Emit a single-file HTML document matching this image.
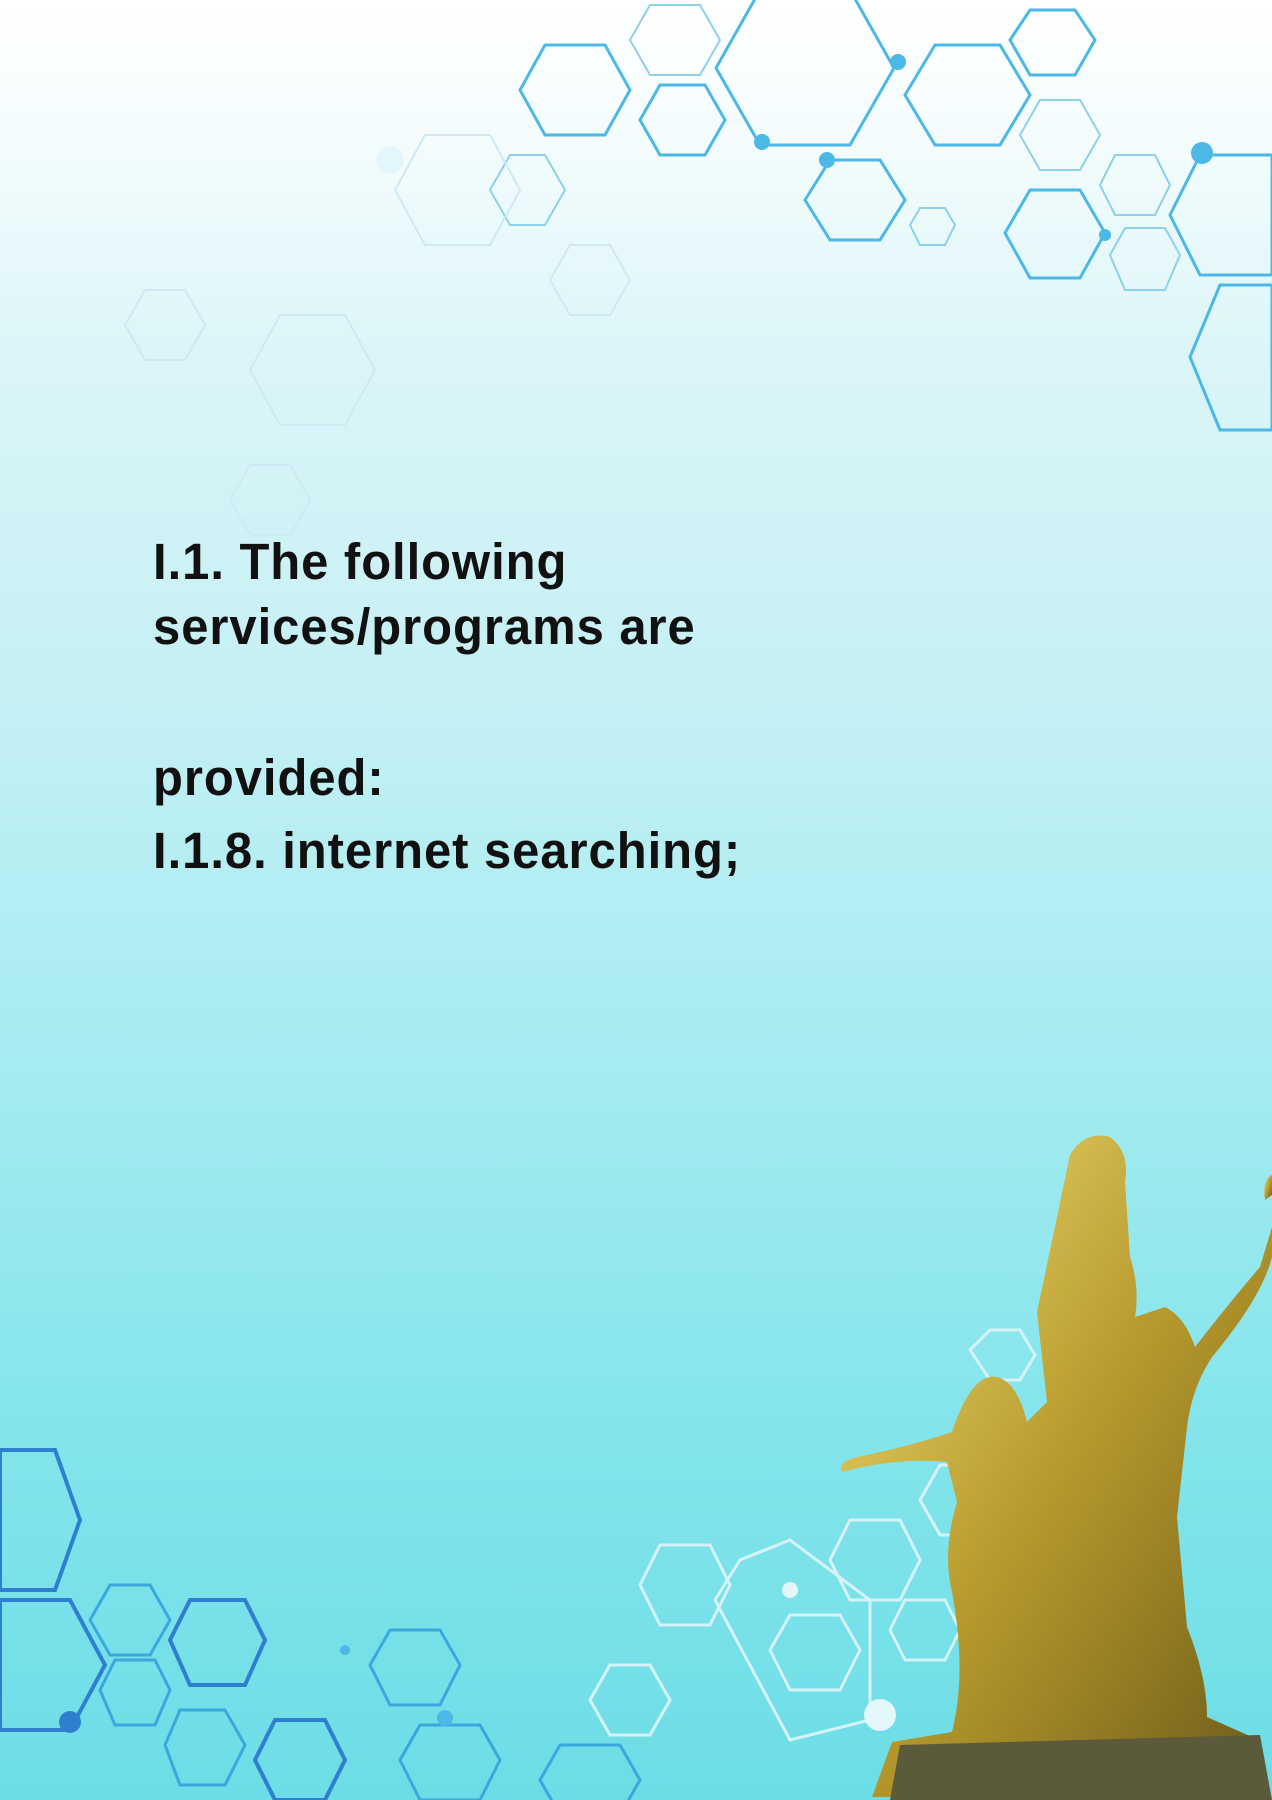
<!DOCTYPE html>
<html><head><meta charset="utf-8"><style>
html,body{margin:0;padding:0}
body{width:1272px;height:1800px;position:relative;overflow:hidden;
background:linear-gradient(180deg,#ffffff 0px,#f3fcfd 150px,#dcf5f8 350px,#c4f0f4 700px,#a6ecf0 1050px,#86e5ec 1400px,#6cdde6 1800px);
font-family:"Liberation Sans",sans-serif}
.t{position:absolute;left:153px;font-size:51px;font-weight:bold;color:#111;white-space:nowrap;transform-origin:0 0;transform:scaleX(0.96);letter-spacing:1px}
svg{position:absolute;left:0;top:0}
</style></head><body>
<svg width="1272" height="1800" viewBox="0 0 1272 1800">
<defs>
<linearGradient id="g" x1="0" y1="0" x2="1" y2="1"><stop offset="0" stop-color="#f2e27a"/><stop offset="0.5" stop-color="#b89a2c"/><stop offset="1" stop-color="#6b5a1a"/></linearGradient>
</defs>
<g fill="none" stroke-width="3">
<g stroke="#4bb8e6">
<polygon points="716,68 760,-10 850,-10 894,68 850,145 760,145"/>
<polygon points="905,95 935,45 1000,45 1030,95 1000,145 935,145"/>
<polygon points="805,200 830,160 880,160 905,200 880,240 830,240"/>
<polygon points="1005,233 1030,190 1080,190 1105,233 1080,278 1030,278"/>
<polygon points="1170,215 1200,155 1272,155 1272,275 1200,275"/>
<polygon points="1190,357 1220,285 1272,285 1272,430 1220,430"/>
<polygon points="1010,40 1030,10 1075,10 1095,40 1075,75 1030,75"/>
<polygon points="640,120 660,85 705,85 725,120 705,155 660,155"/>
<polygon points="520,90 545,45 605,45 630,90 605,135 545,135"/>
</g>
<g stroke="#8fd0ea" stroke-width="2">
<polygon points="1020,135 1040,100 1080,100 1100,135 1080,170 1040,170"/>
<polygon points="1100,185 1115,155 1155,155 1170,185 1155,215 1115,215"/>
<polygon points="1110,255 1125,228 1165,228 1180,255 1165,290 1125,290"/>
<polygon points="630,40 650,5 700,5 720,40 700,75 650,75"/>
<polygon points="490,190 510,155 545,155 565,190 545,225 510,225"/>
<polygon points="910,225 920,208 945,208 955,225 945,245 920,245"/>
</g>
<g stroke="#cfe9f4" stroke-width="2">
<polygon points="395,190 425,135 490,135 520,190 490,245 425,245"/>
<polygon points="125,325 145,290 185,290 205,325 185,360 145,360"/>
<polygon points="250,370 280,315 345,315 375,370 345,425 280,425"/>
<polygon points="550,280 570,245 610,245 630,280 610,315 570,315"/>
<polygon points="230,500 250,465 290,465 310,500 290,535 250,535"/>
</g>
<g stroke="#2f7fd0" stroke-width="4">
<polygon points="0,1450 55,1450 80,1520 55,1590 0,1590"/>
<polygon points="0,1600 70,1600 105,1665 70,1730 0,1730"/>
<polygon points="170,1640 190,1600 245,1600 265,1640 245,1685 190,1685"/>
<polygon points="255,1760 275,1720 325,1720 345,1760 325,1800 275,1800"/>
</g>
<g stroke="#3aa8dc" stroke-width="3">
<polygon points="90,1620 110,1585 150,1585 170,1620 150,1655 110,1655"/>
<polygon points="100,1690 115,1660 155,1660 170,1690 155,1725 115,1725"/>
<polygon points="165,1745 180,1710 225,1710 245,1745 225,1785 180,1785"/>
<polygon points="370,1665 390,1630 440,1630 460,1665 440,1705 390,1705"/>
<polygon points="400,1760 420,1725 480,1725 500,1760 480,1800 420,1800"/>
<polygon points="540,1780 560,1745 620,1745 640,1780 620,1815 560,1815"/>
</g>
<g stroke="#d5f3f7" stroke-width="3">
<polygon points="640,1585 660,1545 710,1545 730,1585 710,1625 660,1625"/>
<polygon points="830,1560 850,1520 900,1520 920,1560 900,1600 850,1600"/>
<polygon points="770,1650 790,1615 840,1615 860,1650 840,1690 790,1690"/>
<polygon points="890,1630 905,1600 945,1600 960,1630 945,1660 905,1660"/>
<polygon points="920,1500 940,1465 980,1465 1000,1500 980,1535 940,1535"/>
<polygon points="970,1350 990,1330 1020,1330 1035,1355 1020,1380 990,1380"/>
<polygon points="590,1700 610,1665 650,1665 670,1700 650,1735 610,1735"/>
<polygon points="715,1600 740,1560 790,1540 870,1600 870,1720 790,1740"/>
</g>
</g>
<g fill="#4bb8e6">
<circle cx="762" cy="142" r="8"/><circle cx="898" cy="62" r="8"/><circle cx="827" cy="160" r="8"/><circle cx="1202" cy="153" r="11"/><circle cx="1105" cy="235" r="6"/>
<circle cx="70" cy="1722" r="11" fill="#2f7fd0"/><circle cx="445" cy="1718" r="8"/><circle cx="345" cy="1650" r="5"/>
</g>
<g fill="#e3f6fa"><circle cx="880" cy="1715" r="16"/><circle cx="790" cy="1590" r="8"/><circle cx="390" cy="160" r="14"/></g>
<g fill="url(#g)">
<path d="M1070,1155 q15,-25 40,-18 q20,15 15,45 l5,75 q10,30 5,60 l30,-10 q20,10 30,40 q35,-45 65,-80 l12,-40 l0,30 q-10,40 -60,100 q-20,30 -25,70 l-10,90 l10,110 q20,50 20,90 l45,20 l10,60 l-390,0 l20,-55 l60,-10 q15,-60 0,-140 q-10,-40 5,-90 l-10,-40 q-50,-5 -105,10 q-5,-10 15,-15 q50,-10 95,-25 q20,-60 45,-55 q20,5 30,45 l20,-20 l-10,-90 z"/>
<path d="M1265,1200 l7,-5 l0,-20 q-10,5 -7,25z"/>
</g>
<path d="M890,1800 l10,-55 l360,-10 l12,65 z" fill="#5b5a3a"/>
</svg>
<div class="t" style="top:532px">I.1. The following</div>
<div class="t" style="top:597px">services/programs are</div>
<div class="t" style="top:748px">provided:</div>
<div class="t" style="top:821px">I.1.8. internet searching;</div>
</body></html>
